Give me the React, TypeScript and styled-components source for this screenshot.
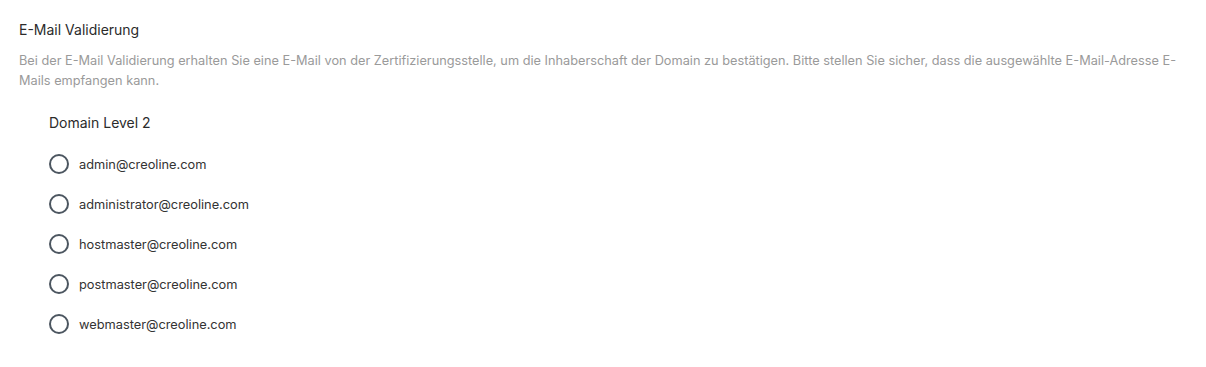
import styled, { createGlobalStyle } from 'styled-components';

const GlobalStyle = createGlobalStyle`
  html, body {
    margin: 0;
    padding: 0;
    background: #ffffff;
  }
  body {
    font-family: Inter, "Noto Sans", "Liberation Sans", sans-serif;
    -webkit-font-smoothing: antialiased;
  }
`;

const EMAILS = [
  'admin@creoline.com',
  'administrator@creoline.com',
  'hostmaster@creoline.com',
  'postmaster@creoline.com',
  'webmaster@creoline.com',
];

export default function App() {
  return (
    <>
      <GlobalStyle />
      <Section>
        <Title>E-Mail Validierung</Title>
        <Description>
          Bei der E-Mail Validierung erhalten Sie eine E-Mail von der Zertifizierungsstelle, um die
          Inhaberschaft der Domain zu bestätigen. Bitte stellen Sie sicher, dass die ausgewählte
          E-Mail-Adresse E-Mails empfangen kann.
        </Description>
        <Group>
          <GroupLabel>Domain Level 2</GroupLabel>
          <OptionList>
            {EMAILS.map((mail) => (
              <Option key={mail}>
                <RadioInput type="radio" name="validation-email" value={mail} />
                <RadioCircle />
                <OptionText>{mail}</OptionText>
              </Option>
            ))}
          </OptionList>
        </Group>
      </Section>
    </>
  );
}

const Section = styled.div`
  padding: 19px 19px 0 19px;
  width: 1168px;
`;

const Title = styled.div`
  font-size: 14px;
  line-height: 22px;
  color: #2b2b2b;
`;

const Description = styled.p`
  margin: 10px 0 0;
  font-size: 12.75px;
  line-height: 20px;
  color: #9a9a9a;
`;

const Group = styled.div`
  padding: 22px 0 0 30px;
`;

const GroupLabel = styled.div`
  font-size: 14px;
  line-height: 20px;
  color: #2b2b2b;
`;

const OptionList = styled.div`
  display: flex;
  flex-direction: column;
  gap: 18px;
  margin-top: 20px;
`;

const Option = styled.label`
  display: flex;
  align-items: center;
  gap: 10px;
  height: 22px;
  cursor: pointer;
`;

const RadioInput = styled.input`
  position: absolute;
  opacity: 0;
  width: 0;
  height: 0;
`;

const RadioCircle = styled.span`
  box-sizing: border-box;
  width: 20px;
  height: 20px;
  border-radius: 50%;
  border: 2px solid #4c5660;
  flex-shrink: 0;
`;

const OptionText = styled.span`
  font-size: 12.8px;
  color: #333333;
`;
